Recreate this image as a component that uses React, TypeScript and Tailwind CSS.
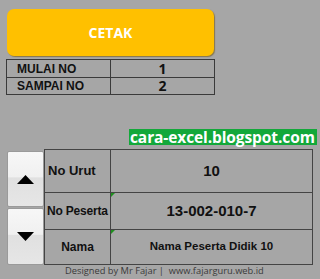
function Arrow({ up }: { up?: boolean }) {
  return (
    <svg width="17" height="9" viewBox="0 0 17 9" className="block">
      {up ? <polygon points="8.5,0 17,9 0,9" fill="#000" /> : <polygon points="0,0 17,0 8.5,9" fill="#000" />}
    </svg>
  );
}

function NavButton({ up, h }: { up?: boolean; h: string }) {
  return (
    <button
      className={`flex ${h} w-[37px] items-center justify-center rounded-[2px] border border-[#9a9a9a] bg-[linear-gradient(#f7f7f7_0%,#f0f0f0_46%,#e0e0e0_48%,#e6e6e6_100%)]`}
    >
      <Arrow up={up} />
    </button>
  );
}

// small green triangle in the corner of an Excel cell (comment marker)
function Marker() {
  return <span className="absolute left-0 top-0 h-0 w-0 border-r-[4px] border-t-[4px] border-r-transparent border-t-[#1f8f1f]" />;
}

export default function App() {
  return (
    <div className="h-[279px] w-[320px] overflow-hidden bg-[#a6a6a6] font-['Liberation_Sans',Arial,sans-serif] text-[#111]">
      <div className="pl-[7px] pt-[9px]">
        <button className="flex h-[47px] w-[207px] items-center justify-center rounded-[7px] bg-[#ffc000] font-['Open_Sans',sans-serif] text-[14px] font-bold text-white shadow-[1px_1px_1px_rgba(110,80,0,0.55)]">
          CETAK
        </button>
      </div>

      {/* MULAI / SAMPAI */}
      <div className="ml-[6px] mt-[3px] w-[209px] border border-[#3a3a3a]">
        {[
          ["MULAI NO", "1"],
          ["SAMPAI NO", "2"],
        ].map(([label, val], i) => (
          <div key={label} className={`flex h-[17px] ${i ? "border-t border-[#3a3a3a]" : ""}`}>
            <div className="flex w-[103px] items-center pl-[10px] text-[12px] font-bold leading-none">{label}</div>
            <div className="flex flex-1 items-center justify-center border-l border-[#3a3a3a] font-['Open_Sans',sans-serif] text-[14px] font-bold leading-[14px]">
              {val}
            </div>
          </div>
        ))}
      </div>

      <div className="ml-[129px] mt-[34px] flex h-[16px] w-fit items-center bg-[#13a83a] pl-[1px] pr-[2px] font-['Open_Sans',sans-serif] text-[15.5px] font-bold leading-[16px] tracking-[-0.1px] whitespace-nowrap text-white">
        cara-excel.blogspot.com
      </div>

      {/* data panel */}
      <div className="mt-[4px] flex">
        <div className="ml-[7px] mt-[2px] flex flex-col gap-[1px]">
          <NavButton up h="h-[56px]" />
          <NavButton h="h-[57px]" />
        </div>
        <div className="w-[269px] border border-[#444]">
          <div className="flex h-[42px]">
            <div className="flex w-[65px] items-center pl-[3px] text-[13px] font-bold">No Urut</div>
            <div className="flex flex-1 items-center justify-center border-l border-[#444] text-[15px] font-bold">10</div>
          </div>
          <div className="flex h-[37px] border-t border-[#444]">
            <div className="flex w-[65px] items-center pl-[2px] text-[12px] font-bold tracking-[-0.2px] whitespace-nowrap">No Peserta</div>
            <div className="relative flex flex-1 items-center justify-center border-l border-[#444] text-[15px] font-bold">
              <Marker />
              13-002-010-7
            </div>
          </div>
          <div className="flex h-[35px] border-t border-[#444]">
            <div className="flex w-[65px] items-center justify-center text-[12px] font-bold">Nama</div>
            <div className="relative flex flex-1 items-center justify-center border-l border-[#444] text-[11.5px] font-bold">
              <Marker />
              Nama Peserta Didik 10
            </div>
          </div>
        </div>
      </div>

      <div className="pl-[65px] font-['Open_Sans',sans-serif] text-[9.3px] leading-[11px] text-[#3a3a3a] whitespace-pre">
        {"Designed by Mr Fajar |  www.fajarguru.web.id"}
      </div>
    </div>
  );
}
